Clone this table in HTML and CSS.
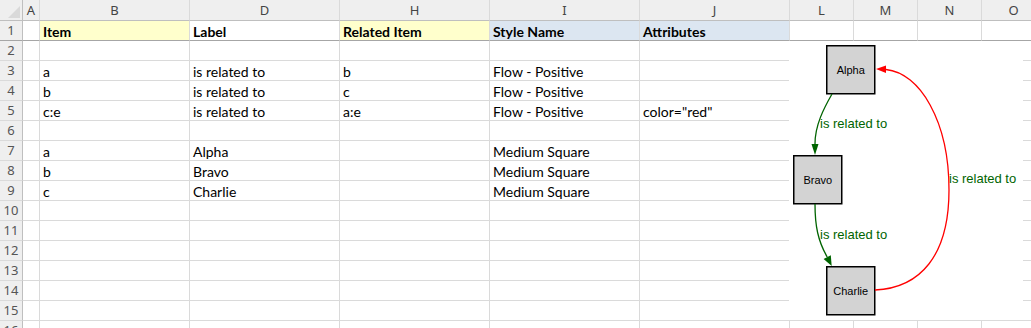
FILE: index.html
```html
<!DOCTYPE html>
<html lang="en">
<head>
    <meta charset="UTF-8">
    <title>Relationships sheet</title>
    <link rel="stylesheet" href="styles.css">
</head>
<body>

<div class="sheet">
    <div class="row head">
        <div class="corner"></div>
        <div>A</div><div>B</div><div>D</div><div>H</div><div>I</div><div>J</div><div>L</div><div>M</div><div>N</div><div>O</div>
    </div>
    <div class="row frozen">
        <div class="num">1</div><div></div><div class="yellow">Item</div><div>Label</div><div class="yellow">Related Item</div><div class="blue">Style Name</div><div class="blue">Attributes</div><div></div><div></div><div></div><div></div>
    </div>
    <div class="row">
        <div class="num">2</div><div></div><div></div><div></div><div></div><div></div><div></div><div></div><div></div><div></div><div></div>
    </div>
    <div class="row">
        <div class="num">3</div><div></div><div>a</div><div>is related to</div><div>b</div><div>Flow - Positive</div><div></div><div></div><div></div><div></div><div></div>
    </div>
    <div class="row">
        <div class="num">4</div><div></div><div>b</div><div>is related to</div><div>c</div><div>Flow - Positive</div><div></div><div></div><div></div><div></div><div></div>
    </div>
    <div class="row">
        <div class="num">5</div><div></div><div>c:e</div><div>is related to</div><div>a:e</div><div>Flow - Positive</div><div>color="red"</div><div></div><div></div><div></div><div></div>
    </div>
    <div class="row">
        <div class="num">6</div><div></div><div></div><div></div><div></div><div></div><div></div><div></div><div></div><div></div><div></div>
    </div>
    <div class="row">
        <div class="num">7</div><div></div><div>a</div><div>Alpha</div><div></div><div>Medium Square</div><div></div><div></div><div></div><div></div><div></div>
    </div>
    <div class="row">
        <div class="num">8</div><div></div><div>b</div><div>Bravo</div><div></div><div>Medium Square</div><div></div><div></div><div></div><div></div><div></div>
    </div>
    <div class="row">
        <div class="num">9</div><div></div><div>c</div><div>Charlie</div><div></div><div>Medium Square</div><div></div><div></div><div></div><div></div><div></div>
    </div>
    <div class="row">
        <div class="num">10</div><div></div><div></div><div></div><div></div><div></div><div></div><div></div><div></div><div></div><div></div>
    </div>
    <div class="row">
        <div class="num">11</div><div></div><div></div><div></div><div></div><div></div><div></div><div></div><div></div><div></div><div></div>
    </div>
    <div class="row">
        <div class="num">12</div><div></div><div></div><div></div><div></div><div></div><div></div><div></div><div></div><div></div><div></div>
    </div>
    <div class="row">
        <div class="num">13</div><div></div><div></div><div></div><div></div><div></div><div></div><div></div><div></div><div></div><div></div>
    </div>
    <div class="row">
        <div class="num">14</div><div></div><div></div><div></div><div></div><div></div><div></div><div></div><div></div><div></div><div></div>
    </div>
    <div class="row">
        <div class="num">15</div><div></div><div></div><div></div><div></div><div></div><div></div><div></div><div></div><div></div><div></div>
    </div>
    <div class="row">
        <div class="num">16</div><div></div><div></div><div></div><div></div><div></div><div></div><div></div><div></div><div></div><div></div>
    </div>

    <!-- graph picture floating over columns L:O -->
    <svg class="graph" width="234" height="279" viewBox="0 0 234 279">
        <rect class="node" x="37.75" y="4.75" width="48" height="48"/>
        <text class="node-label" x="61.75" y="32.5">Alpha</text>

        <rect class="node" x="4.75" y="114.75" width="48" height="48"/>
        <text class="node-label" x="28.75" y="142.5">Bravo</text>

        <rect class="node" x="37.75" y="225.75" width="48" height="48"/>
        <text class="node-label" x="61.75" y="253.5">Charlie</text>

        <path class="edge green" d="M43,53 C35,67 26,84 26,103"/>
        <polygon class="head green" points="26,114 22.5,103 29.5,103"/>
        <text class="edge-label" x="31" y="87">is related to</text>

        <path class="edge green" d="M26,163 C26,185 29,200 38.2,216"/>
        <polygon class="head green" points="42.7,225 34.6,217.9 41.8,214.3"/>
        <text class="edge-label" x="31" y="198">is related to</text>

        <path class="edge red" d="M86,249 C131,247 160,215 160,149 C160,80 131,32 97,28.5"/>
        <polygon class="head red" points="87,28 97,24.5 97,32"/>
        <text class="edge-label" x="160" y="142">is related to</text>
    </svg>
</div>

</body>
</html>
```

FILE: styles.css
```css
body {
    margin: 0;
    background: #fff;
    overflow: hidden;
    font-family: Lato, "Liberation Sans", sans-serif;
    font-size: 14px;
    color: #000;
}
.sheet {
    position: relative;
    width: 1046px;
}
.row {
    display: grid;
    grid-template-columns: 23px 17px repeat(5, 150px) repeat(4, 64px);
    height: 20px;
}
.row > div {
    box-sizing: border-box;
    border-right: 1px solid #dadada;
    border-bottom: 1px solid #dadada;
    padding: 1px 3px 0;
    line-height: 19px;
    white-space: nowrap;
    overflow: hidden;
}
.row > .num {
    background: #efefef;
    border-right-color: #bfbfbf;
    border-bottom-color: #dadada;
    color: #555;
    text-align: center;
    padding: 0;
    font-family: "Noto Sans", sans-serif;
    font-size: 13px;
}
.head {
    height: 21px;
}
.head > div {
    background: #efefef;
    border-bottom-color: #bfbfbf;
    color: #444;
    text-align: center;
    padding: 0;
    font-family: "Noto Sans", sans-serif;
    font-size: 13px;
    line-height: 20px;
}
.head > .corner {
    position: relative;
    border-right-color: #bfbfbf;
}
.head > .corner::after {
    content: "";
    position: absolute;
    right: 2px;
    bottom: 2px;
    width: 12px;
    height: 12px;
    background: #d9d9d9;
    clip-path: polygon(100% 0, 100% 100%, 0 100%);
}
.frozen > div {
    font-weight: bold;
    border-bottom-color: #a6a6a6;
}
.frozen > .num {
    font-weight: normal;
    border-bottom-color: #a6a6a6;
}
.yellow {
    background: #ffffcc;
}
.blue {
    background: #dce6f1;
}

.graph {
    position: absolute;
    left: 789px;
    top: 41px;
    background: #fff;
    font-family: "Liberation Sans", Arial, sans-serif;
}
.node {
    fill: #d3d3d3;
    stroke: #000;
    stroke-width: 1.5;
}
.node-label {
    font-size: 11px;
    text-anchor: middle;
    fill: #000;
}
.edge {
    fill: none;
    stroke-width: 1.3;
}
.edge.green {
    stroke: #006400;
}
.edge.red {
    stroke: #ff0000;
}
.head.green {
    fill: #006400;
}
.head.red {
    fill: #ff0000;
}
.edge-label {
    font-size: 13px;
    fill: #006400;
}
```
